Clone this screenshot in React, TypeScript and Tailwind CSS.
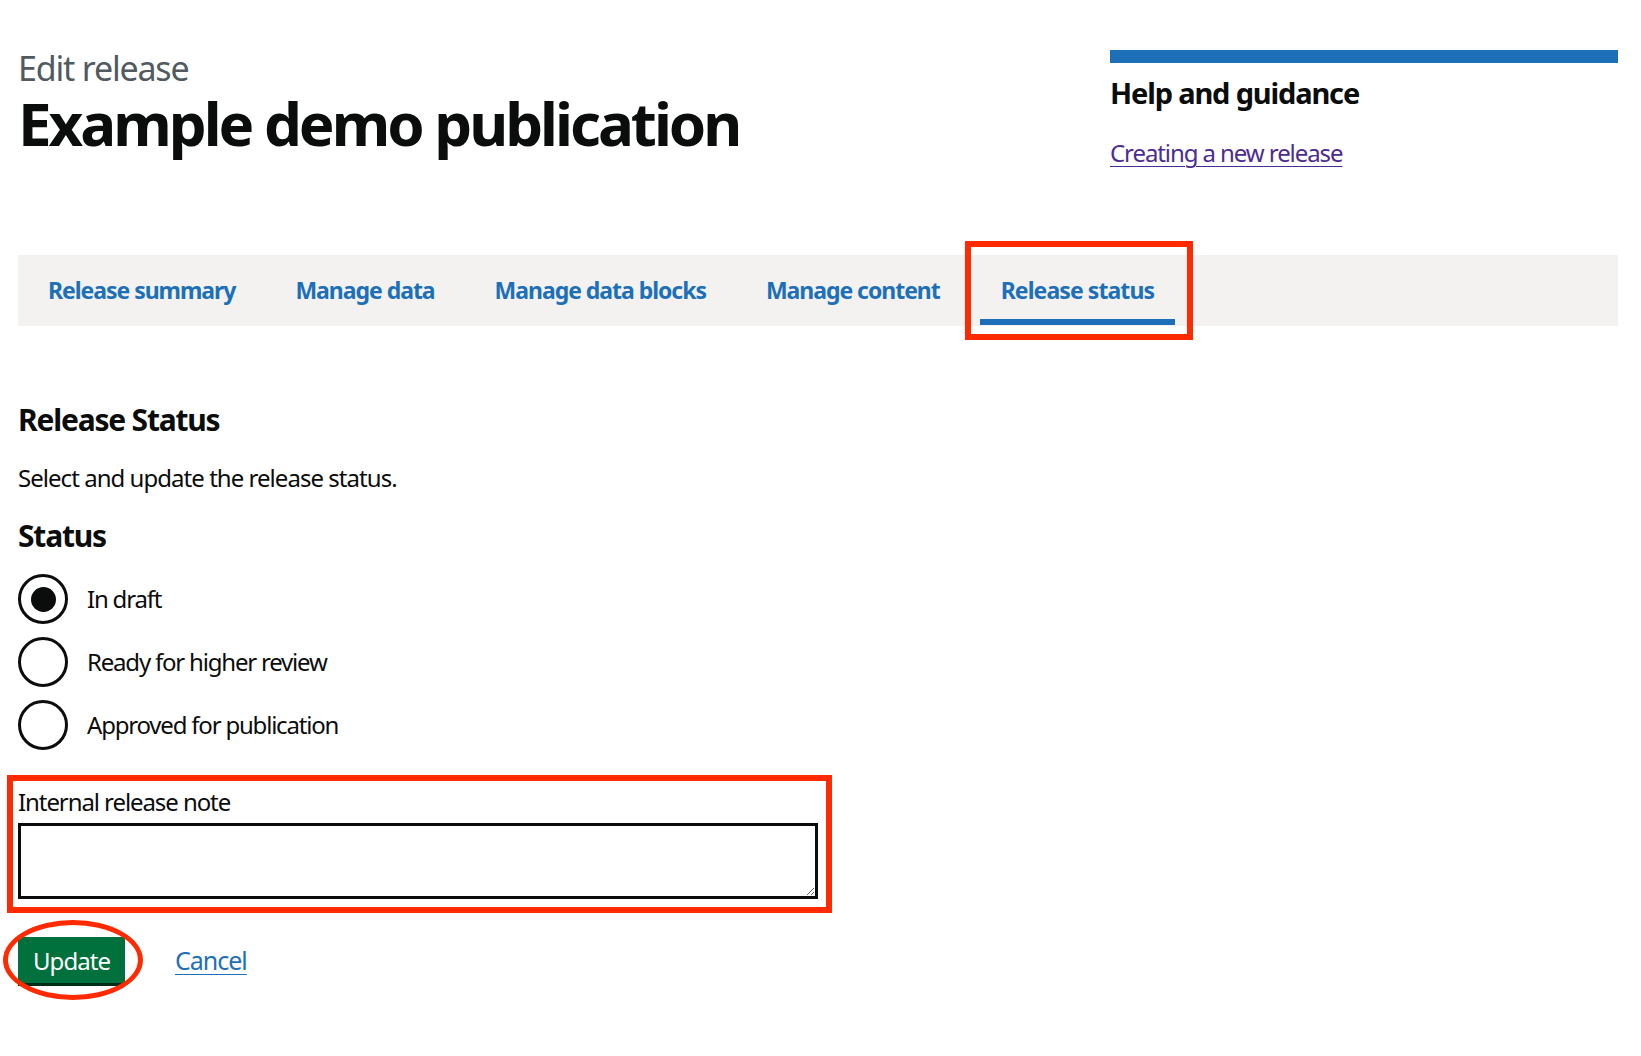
export default function App() {
  const tabs = [
    { label: "Release summary", active: false },
    { label: "Manage data", active: false },
    { label: "Manage data blocks", active: false },
    { label: "Manage content", active: false },
    { label: "Release status", active: true },
  ];
  const radios = [
    { label: "In draft", checked: true },
    { label: "Ready for higher review", checked: false },
    { label: "Approved for publication", checked: false },
  ];
  return (
    <div className="min-h-screen bg-white font-['Noto_Sans',sans-serif] text-[#0b0c0c]">
      <div className="ml-[18px] w-[1600px] pt-[48px]">
        <div className="flex h-[207px] justify-between">
          <div>
            <span className="block text-[34px] leading-[40px] tracking-[-0.035em] text-[#505a5f]">Edit release</span>
            <h1 className="mt-[2px] text-[60px] font-bold leading-[67px] tracking-[-0.05em]">Example demo publication</h1>
          </div>
          <aside className="mt-[2px] h-fit w-[508px] border-t-[13px] border-[#1d70b8]">
            <h2 className="mt-[12px] text-[29px] font-bold leading-[36px] tracking-[-0.04em]">Help and guidance</h2>
            <a
              href="#"
              className="mt-[26px] block w-fit text-[24px] leading-[32px] tracking-[-0.045em] text-[#4c2c92] underline decoration-1 underline-offset-[4px]"
            >
              Creating a new release
            </a>
          </aside>
        </div>

        <nav className="flex h-[71px] items-start bg-[#f3f2f1]">
          {tabs.map((t) => (
            <a
              key={t.label}
              href="#"
              className={
                t.active
                  ? "relative mx-[10px] flex h-[70px] items-center border-b-[6px] border-[#1d70b8] px-[21px] pt-[6px] text-[23px] font-bold tracking-[-0.04em] text-[#1d70b8]"
                  : "relative mx-[10px] flex h-[70px] items-center border-b-[6px] border-transparent px-[20px] pt-[6px] text-[23px] font-bold tracking-[-0.045em] text-[#1d70b8]"
              }
            >
              {t.label}
              {t.active && (
                <span className="pointer-events-none absolute -bottom-[21px] -left-[15px] -right-[18px] -top-[14px] border-[6px] border-[#ff2a00]" />
              )}
            </a>
          ))}
        </nav>

        <section className="mt-[76px]">
          <h2 className="text-[30px] font-bold leading-[36px] tracking-[-0.04em]">Release Status</h2>
          <p className="mt-[24px] text-[24px] leading-[32px] tracking-[-0.04em]">Select and update the release status.</p>
          <div className="mt-[24px] text-[30px] font-bold leading-[36px] tracking-[-0.04em]">Status</div>
          <div className="mt-[20px] flex flex-col gap-[13px]">
            {radios.map((r) => (
              <label key={r.label} className="flex h-[50px] items-center gap-[19px]">
                <span className="flex h-[50px] w-[50px] items-center justify-center rounded-full border-[3px] border-[#0b0c0c]">
                  {r.checked && <span className="h-[25px] w-[25px] rounded-full bg-[#0b0c0c]" />}
                </span>
                <span className="text-[24px] leading-[32px] tracking-[-0.05em]">{r.label}</span>
              </label>
            ))}
          </div>

          <div className="relative mt-[36px] w-[800px]">
            <label className="block text-[24px] leading-[32px] tracking-[-0.045em]">Internal release note</label>
            <textarea className="mt-[5px] block h-[76px] w-[800px] border-[3px] border-[#0b0c0c] bg-white" />
            <span className="pointer-events-none absolute -bottom-[14px] -left-[11px] -right-[14px] -top-[11px] border-[6px] border-[#ff2a00]" />
          </div>

          <div className="mt-[38px] flex items-center gap-[50px]">
            <div className="relative">
              <button className="flex h-[46px] items-center bg-[#00703c] px-[15px] pt-[2px] text-[24px] leading-[32px] tracking-[-0.04em] text-white shadow-[0_3px_0_#002d18]">
                Update
              </button>
              <span className="pointer-events-none absolute -bottom-[17px] -left-[15px] -right-[18px] -top-[17px] rounded-[50%] border-[5px] border-[#ff2a00]" />
            </div>
            <a
              href="#"
              className="text-[25px] leading-[32px] tracking-[-0.04em] text-[#1d70b8] underline decoration-1 underline-offset-[4px]"
            >
              Cancel
            </a>
          </div>
        </section>
      </div>
    </div>
  );
}
